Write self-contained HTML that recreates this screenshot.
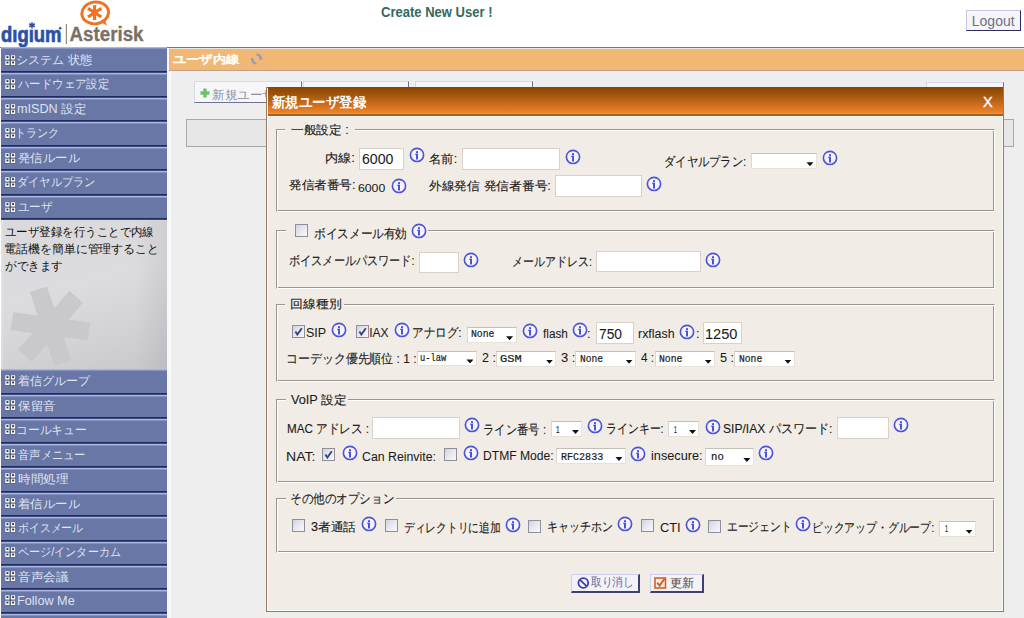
<!DOCTYPE html>
<html><head><meta charset="utf-8"><style>
html,body{margin:0;padding:0}
body{width:1024px;height:618px;overflow:hidden;position:relative;background:#fff;font-family:'Liberation Sans',sans-serif}
.sb{position:absolute;left:1px;width:166px;background:#6977a6}
.sbl{position:absolute;left:1px;width:166px;height:1px;background:#a9b5e2;box-shadow:0 1px 0 #8592c4}
.sbd{position:absolute;left:1px;width:166px;height:1px;background:#1f2a5a;box-shadow:0 1px 0 #3e4a80}
.inf{position:absolute}
.cb{position:absolute;width:11px;height:11px;border:1px solid #8e8f98;background:linear-gradient(135deg,#cfd2e0 0%,#e8e9f0 50%,#f8f8fa 100%)}
.inp{position:absolute;box-sizing:border-box;background:#fff;border:1px solid #d6d2ca}
.sel{position:absolute;box-sizing:border-box;background:#fff;border:1px solid #e6e2da;border-top-color:#c4c0b8;border-left-color:#dcd8d0}
.sel b{position:absolute;width:7px;height:4px;background:#111;clip-path:polygon(0 0,100% 0,50% 100%)}
.fs{position:absolute;box-sizing:border-box;border-top:1px solid #9a958e;border-left:1px solid #9a958e;border-bottom:1px solid #fff;border-right:1px solid #fff;box-shadow:inset 1px 1px 0 #fff, inset -1px -1px 0 #9a958e}
.btn{position:absolute;box-sizing:border-box;background:#f2f2f8;border-top:1px solid #d0d0ec;border-left:1px solid #d0d0ec;border-right:2px solid #404070;border-bottom:2px solid #404070}
</style></head><body>
<!-- logo -->
<svg style="position:absolute;left:0;top:0" width="150" height="47" viewBox="0 0 150 47">
  <ellipse cx="95.2" cy="12.9" rx="13.4" ry="10.9" fill="none" stroke="#f27224" stroke-width="2.9" transform="rotate(-8 95.2 12.9)"/>
  <path d="M99.5 21.5 L107 25.5 L104.5 18.5 Z" fill="#f27224"/>
  <g stroke="#f27224" stroke-width="3.2"><path d="M94.6 5.2v14.8"/><path d="M88 8.4l13.4 8.6"/><path d="M101.4 8.4l-13.4 8.6"/></g>
  <text x="1" y="41.8" font-family="Liberation Sans" font-weight="bold" font-size="21.5" fill="#2b50a8" stroke="#2b50a8" stroke-width="0.7" textLength="60.5" lengthAdjust="spacingAndGlyphs">d&#305;g&#305;um</text>
  <g stroke="#2b50a8" stroke-width="1.6"><path d="M32 22.2v6.2"/><path d="M29.2 23.8l5.6 3"/><path d="M34.8 23.8l-5.6 3"/></g>
  <circle cx="60.2" cy="28.2" r="1.3" fill="#2b50a8"/>
  <rect x="65.8" y="24" width="1.1" height="20" fill="#8a7f72"/>
  <text x="69.5" y="41.2" font-family="Liberation Sans" font-weight="bold" font-size="19.6" fill="#7c7064" stroke="#7c7064" stroke-width="0.3" textLength="74" lengthAdjust="spacingAndGlyphs">Asterisk</text>
</svg>
<div style="position:absolute;left:0;top:46.6px;width:1024px;height:1.5px;background:#5a78b8"></div>
<!-- logout btn -->
<div style="position:absolute;left:966px;top:9.5px;width:54.5px;height:21.5px;box-sizing:border-box;background:#f6f6f8;border-top:1px solid #c8c8e6;border-left:1px solid #c8c8e6;border-right:1.5px solid #2c2c60;border-bottom:1.5px solid #2c2c60"></div>
<!-- sidebar -->
<div style="position:absolute;left:167px;top:48px;width:2px;height:570px;background:#f8f8fc"></div>
<div class="sb" style="top:47px;height:173px"></div><div class="sbl" style="top:47px"></div><div class="sbd" style="top:71px"></div><div class="sbl" style="top:73px"></div><div class="sbd" style="top:96px"></div><div class="sbl" style="top:98px"></div><div class="sbd" style="top:120px"></div><div class="sbl" style="top:122px"></div><div class="sbd" style="top:145px"></div><div class="sbl" style="top:147px"></div><div class="sbd" style="top:169px"></div><div class="sbl" style="top:171px"></div><div class="sbd" style="top:194px"></div><div class="sbl" style="top:196px"></div><div class="sbd" style="top:218px"></div><div class="sb" style="top:369px;height:245px"></div><div class="sbl" style="top:369px"></div><div class="sbd" style="top:393px"></div><div class="sbl" style="top:395px"></div><div class="sbd" style="top:417px"></div><div class="sbl" style="top:419px"></div><div class="sbd" style="top:442px"></div><div class="sbl" style="top:444px"></div><div class="sbd" style="top:466px"></div><div class="sbl" style="top:468px"></div><div class="sbd" style="top:491px"></div><div class="sbl" style="top:493px"></div><div class="sbd" style="top:515px"></div><div class="sbl" style="top:517px"></div><div class="sbd" style="top:540px"></div><div class="sbl" style="top:542px"></div><div class="sbd" style="top:564px"></div><div class="sbl" style="top:566px"></div><div class="sbd" style="top:588px"></div><div class="sbl" style="top:590px"></div><div class="sbd" style="top:612px"></div><div class="sb" style="top:614px;height:10px"></div><div class="sbl" style="top:614px"></div>
<svg style="position:absolute;left:4.5px;top:54.5px" width="11" height="11" viewBox="0 0 11 11"><rect x="0" y="0" width="10.4" height="10.2" fill="#3a4470"/><rect x="0.2" y="0.2" width="4.4" height="4.4" fill="#f6f8f0"/><rect x="1.5" y="1.2" width="1.9" height="1.8" fill="#303448"/><rect x="0.2" y="5.6" width="4.4" height="4.4" fill="#f6f8f0"/><rect x="1.5" y="6.6" width="1.9" height="1.8" fill="#303448"/><rect x="5.8" y="0.2" width="4.4" height="4.4" fill="#f6f8f0"/><rect x="7.1" y="1.2" width="1.9" height="1.8" fill="#303448"/><rect x="5.8" y="5.6" width="4.4" height="4.4" fill="#f6f8f0"/><rect x="7.1" y="6.6" width="1.9" height="1.8" fill="#303448"/></svg><svg style="position:absolute;left:4.5px;top:78.8px" width="11" height="11" viewBox="0 0 11 11"><rect x="0" y="0" width="10.4" height="10.2" fill="#3a4470"/><rect x="0.2" y="0.2" width="4.4" height="4.4" fill="#f6f8f0"/><rect x="1.5" y="1.2" width="1.9" height="1.8" fill="#303448"/><rect x="0.2" y="5.6" width="4.4" height="4.4" fill="#f6f8f0"/><rect x="1.5" y="6.6" width="1.9" height="1.8" fill="#303448"/><rect x="5.8" y="0.2" width="4.4" height="4.4" fill="#f6f8f0"/><rect x="7.1" y="1.2" width="1.9" height="1.8" fill="#303448"/><rect x="5.8" y="5.6" width="4.4" height="4.4" fill="#f6f8f0"/><rect x="7.1" y="6.6" width="1.9" height="1.8" fill="#303448"/></svg><svg style="position:absolute;left:4.5px;top:103.8px" width="11" height="11" viewBox="0 0 11 11"><rect x="0" y="0" width="10.4" height="10.2" fill="#3a4470"/><rect x="0.2" y="0.2" width="4.4" height="4.4" fill="#f6f8f0"/><rect x="1.5" y="1.2" width="1.9" height="1.8" fill="#303448"/><rect x="0.2" y="5.6" width="4.4" height="4.4" fill="#f6f8f0"/><rect x="1.5" y="6.6" width="1.9" height="1.8" fill="#303448"/><rect x="5.8" y="0.2" width="4.4" height="4.4" fill="#f6f8f0"/><rect x="7.1" y="1.2" width="1.9" height="1.8" fill="#303448"/><rect x="5.8" y="5.6" width="4.4" height="4.4" fill="#f6f8f0"/><rect x="7.1" y="6.6" width="1.9" height="1.8" fill="#303448"/></svg><svg style="position:absolute;left:4.5px;top:127.8px" width="11" height="11" viewBox="0 0 11 11"><rect x="0" y="0" width="10.4" height="10.2" fill="#3a4470"/><rect x="0.2" y="0.2" width="4.4" height="4.4" fill="#f6f8f0"/><rect x="1.5" y="1.2" width="1.9" height="1.8" fill="#303448"/><rect x="0.2" y="5.6" width="4.4" height="4.4" fill="#f6f8f0"/><rect x="1.5" y="6.6" width="1.9" height="1.8" fill="#303448"/><rect x="5.8" y="0.2" width="4.4" height="4.4" fill="#f6f8f0"/><rect x="7.1" y="1.2" width="1.9" height="1.8" fill="#303448"/><rect x="5.8" y="5.6" width="4.4" height="4.4" fill="#f6f8f0"/><rect x="7.1" y="6.6" width="1.9" height="1.8" fill="#303448"/></svg><svg style="position:absolute;left:4.5px;top:152.8px" width="11" height="11" viewBox="0 0 11 11"><rect x="0" y="0" width="10.4" height="10.2" fill="#3a4470"/><rect x="0.2" y="0.2" width="4.4" height="4.4" fill="#f6f8f0"/><rect x="1.5" y="1.2" width="1.9" height="1.8" fill="#303448"/><rect x="0.2" y="5.6" width="4.4" height="4.4" fill="#f6f8f0"/><rect x="1.5" y="6.6" width="1.9" height="1.8" fill="#303448"/><rect x="5.8" y="0.2" width="4.4" height="4.4" fill="#f6f8f0"/><rect x="7.1" y="1.2" width="1.9" height="1.8" fill="#303448"/><rect x="5.8" y="5.6" width="4.4" height="4.4" fill="#f6f8f0"/><rect x="7.1" y="6.6" width="1.9" height="1.8" fill="#303448"/></svg><svg style="position:absolute;left:4.5px;top:176.8px" width="11" height="11" viewBox="0 0 11 11"><rect x="0" y="0" width="10.4" height="10.2" fill="#3a4470"/><rect x="0.2" y="0.2" width="4.4" height="4.4" fill="#f6f8f0"/><rect x="1.5" y="1.2" width="1.9" height="1.8" fill="#303448"/><rect x="0.2" y="5.6" width="4.4" height="4.4" fill="#f6f8f0"/><rect x="1.5" y="6.6" width="1.9" height="1.8" fill="#303448"/><rect x="5.8" y="0.2" width="4.4" height="4.4" fill="#f6f8f0"/><rect x="7.1" y="1.2" width="1.9" height="1.8" fill="#303448"/><rect x="5.8" y="5.6" width="4.4" height="4.4" fill="#f6f8f0"/><rect x="7.1" y="6.6" width="1.9" height="1.8" fill="#303448"/></svg><svg style="position:absolute;left:4.5px;top:201.8px" width="11" height="11" viewBox="0 0 11 11"><rect x="0" y="0" width="10.4" height="10.2" fill="#3a4470"/><rect x="0.2" y="0.2" width="4.4" height="4.4" fill="#f6f8f0"/><rect x="1.5" y="1.2" width="1.9" height="1.8" fill="#303448"/><rect x="0.2" y="5.6" width="4.4" height="4.4" fill="#f6f8f0"/><rect x="1.5" y="6.6" width="1.9" height="1.8" fill="#303448"/><rect x="5.8" y="0.2" width="4.4" height="4.4" fill="#f6f8f0"/><rect x="7.1" y="1.2" width="1.9" height="1.8" fill="#303448"/><rect x="5.8" y="5.6" width="4.4" height="4.4" fill="#f6f8f0"/><rect x="7.1" y="6.6" width="1.9" height="1.8" fill="#303448"/></svg><svg style="position:absolute;left:4.5px;top:375.1px" width="11" height="11" viewBox="0 0 11 11"><rect x="0" y="0" width="10.4" height="10.2" fill="#3a4470"/><rect x="0.2" y="0.2" width="4.4" height="4.4" fill="#f6f8f0"/><rect x="1.5" y="1.2" width="1.9" height="1.8" fill="#303448"/><rect x="0.2" y="5.6" width="4.4" height="4.4" fill="#f6f8f0"/><rect x="1.5" y="6.6" width="1.9" height="1.8" fill="#303448"/><rect x="5.8" y="0.2" width="4.4" height="4.4" fill="#f6f8f0"/><rect x="7.1" y="1.2" width="1.9" height="1.8" fill="#303448"/><rect x="5.8" y="5.6" width="4.4" height="4.4" fill="#f6f8f0"/><rect x="7.1" y="6.6" width="1.9" height="1.8" fill="#303448"/></svg><svg style="position:absolute;left:4.5px;top:400.4px" width="11" height="11" viewBox="0 0 11 11"><rect x="0" y="0" width="10.4" height="10.2" fill="#3a4470"/><rect x="0.2" y="0.2" width="4.4" height="4.4" fill="#f6f8f0"/><rect x="1.5" y="1.2" width="1.9" height="1.8" fill="#303448"/><rect x="0.2" y="5.6" width="4.4" height="4.4" fill="#f6f8f0"/><rect x="1.5" y="6.6" width="1.9" height="1.8" fill="#303448"/><rect x="5.8" y="0.2" width="4.4" height="4.4" fill="#f6f8f0"/><rect x="7.1" y="1.2" width="1.9" height="1.8" fill="#303448"/><rect x="5.8" y="5.6" width="4.4" height="4.4" fill="#f6f8f0"/><rect x="7.1" y="6.6" width="1.9" height="1.8" fill="#303448"/></svg><svg style="position:absolute;left:4.5px;top:424.4px" width="11" height="11" viewBox="0 0 11 11"><rect x="0" y="0" width="10.4" height="10.2" fill="#3a4470"/><rect x="0.2" y="0.2" width="4.4" height="4.4" fill="#f6f8f0"/><rect x="1.5" y="1.2" width="1.9" height="1.8" fill="#303448"/><rect x="0.2" y="5.6" width="4.4" height="4.4" fill="#f6f8f0"/><rect x="1.5" y="6.6" width="1.9" height="1.8" fill="#303448"/><rect x="5.8" y="0.2" width="4.4" height="4.4" fill="#f6f8f0"/><rect x="7.1" y="1.2" width="1.9" height="1.8" fill="#303448"/><rect x="5.8" y="5.6" width="4.4" height="4.4" fill="#f6f8f0"/><rect x="7.1" y="6.6" width="1.9" height="1.8" fill="#303448"/></svg><svg style="position:absolute;left:4.5px;top:449.4px" width="11" height="11" viewBox="0 0 11 11"><rect x="0" y="0" width="10.4" height="10.2" fill="#3a4470"/><rect x="0.2" y="0.2" width="4.4" height="4.4" fill="#f6f8f0"/><rect x="1.5" y="1.2" width="1.9" height="1.8" fill="#303448"/><rect x="0.2" y="5.6" width="4.4" height="4.4" fill="#f6f8f0"/><rect x="1.5" y="6.6" width="1.9" height="1.8" fill="#303448"/><rect x="5.8" y="0.2" width="4.4" height="4.4" fill="#f6f8f0"/><rect x="7.1" y="1.2" width="1.9" height="1.8" fill="#303448"/><rect x="5.8" y="5.6" width="4.4" height="4.4" fill="#f6f8f0"/><rect x="7.1" y="6.6" width="1.9" height="1.8" fill="#303448"/></svg><svg style="position:absolute;left:4.5px;top:473.4px" width="11" height="11" viewBox="0 0 11 11"><rect x="0" y="0" width="10.4" height="10.2" fill="#3a4470"/><rect x="0.2" y="0.2" width="4.4" height="4.4" fill="#f6f8f0"/><rect x="1.5" y="1.2" width="1.9" height="1.8" fill="#303448"/><rect x="0.2" y="5.6" width="4.4" height="4.4" fill="#f6f8f0"/><rect x="1.5" y="6.6" width="1.9" height="1.8" fill="#303448"/><rect x="5.8" y="0.2" width="4.4" height="4.4" fill="#f6f8f0"/><rect x="7.1" y="1.2" width="1.9" height="1.8" fill="#303448"/><rect x="5.8" y="5.6" width="4.4" height="4.4" fill="#f6f8f0"/><rect x="7.1" y="6.6" width="1.9" height="1.8" fill="#303448"/></svg><svg style="position:absolute;left:4.5px;top:498.4px" width="11" height="11" viewBox="0 0 11 11"><rect x="0" y="0" width="10.4" height="10.2" fill="#3a4470"/><rect x="0.2" y="0.2" width="4.4" height="4.4" fill="#f6f8f0"/><rect x="1.5" y="1.2" width="1.9" height="1.8" fill="#303448"/><rect x="0.2" y="5.6" width="4.4" height="4.4" fill="#f6f8f0"/><rect x="1.5" y="6.6" width="1.9" height="1.8" fill="#303448"/><rect x="5.8" y="0.2" width="4.4" height="4.4" fill="#f6f8f0"/><rect x="7.1" y="1.2" width="1.9" height="1.8" fill="#303448"/><rect x="5.8" y="5.6" width="4.4" height="4.4" fill="#f6f8f0"/><rect x="7.1" y="6.6" width="1.9" height="1.8" fill="#303448"/></svg><svg style="position:absolute;left:4.5px;top:522.4px" width="11" height="11" viewBox="0 0 11 11"><rect x="0" y="0" width="10.4" height="10.2" fill="#3a4470"/><rect x="0.2" y="0.2" width="4.4" height="4.4" fill="#f6f8f0"/><rect x="1.5" y="1.2" width="1.9" height="1.8" fill="#303448"/><rect x="0.2" y="5.6" width="4.4" height="4.4" fill="#f6f8f0"/><rect x="1.5" y="6.6" width="1.9" height="1.8" fill="#303448"/><rect x="5.8" y="0.2" width="4.4" height="4.4" fill="#f6f8f0"/><rect x="7.1" y="1.2" width="1.9" height="1.8" fill="#303448"/><rect x="5.8" y="5.6" width="4.4" height="4.4" fill="#f6f8f0"/><rect x="7.1" y="6.6" width="1.9" height="1.8" fill="#303448"/></svg><svg style="position:absolute;left:4.5px;top:547.4px" width="11" height="11" viewBox="0 0 11 11"><rect x="0" y="0" width="10.4" height="10.2" fill="#3a4470"/><rect x="0.2" y="0.2" width="4.4" height="4.4" fill="#f6f8f0"/><rect x="1.5" y="1.2" width="1.9" height="1.8" fill="#303448"/><rect x="0.2" y="5.6" width="4.4" height="4.4" fill="#f6f8f0"/><rect x="1.5" y="6.6" width="1.9" height="1.8" fill="#303448"/><rect x="5.8" y="0.2" width="4.4" height="4.4" fill="#f6f8f0"/><rect x="7.1" y="1.2" width="1.9" height="1.8" fill="#303448"/><rect x="5.8" y="5.6" width="4.4" height="4.4" fill="#f6f8f0"/><rect x="7.1" y="6.6" width="1.9" height="1.8" fill="#303448"/></svg><svg style="position:absolute;left:4.5px;top:571.4px" width="11" height="11" viewBox="0 0 11 11"><rect x="0" y="0" width="10.4" height="10.2" fill="#3a4470"/><rect x="0.2" y="0.2" width="4.4" height="4.4" fill="#f6f8f0"/><rect x="1.5" y="1.2" width="1.9" height="1.8" fill="#303448"/><rect x="0.2" y="5.6" width="4.4" height="4.4" fill="#f6f8f0"/><rect x="1.5" y="6.6" width="1.9" height="1.8" fill="#303448"/><rect x="5.8" y="0.2" width="4.4" height="4.4" fill="#f6f8f0"/><rect x="7.1" y="1.2" width="1.9" height="1.8" fill="#303448"/><rect x="5.8" y="5.6" width="4.4" height="4.4" fill="#f6f8f0"/><rect x="7.1" y="6.6" width="1.9" height="1.8" fill="#303448"/></svg><svg style="position:absolute;left:4.5px;top:595.4px" width="11" height="11" viewBox="0 0 11 11"><rect x="0" y="0" width="10.4" height="10.2" fill="#3a4470"/><rect x="0.2" y="0.2" width="4.4" height="4.4" fill="#f6f8f0"/><rect x="1.5" y="1.2" width="1.9" height="1.8" fill="#303448"/><rect x="0.2" y="5.6" width="4.4" height="4.4" fill="#f6f8f0"/><rect x="1.5" y="6.6" width="1.9" height="1.8" fill="#303448"/><rect x="5.8" y="0.2" width="4.4" height="4.4" fill="#f6f8f0"/><rect x="7.1" y="1.2" width="1.9" height="1.8" fill="#303448"/><rect x="5.8" y="5.6" width="4.4" height="4.4" fill="#f6f8f0"/><rect x="7.1" y="6.6" width="1.9" height="1.8" fill="#303448"/></svg>
<div style="position:absolute;left:1px;top:219.5px;width:166px;height:149.8px;background:linear-gradient(90deg,rgba(255,255,255,0.25) 0px,rgba(255,255,255,0) 3px),linear-gradient(90deg,rgba(0,0,20,0) 80%,rgba(0,0,20,0.06) 100%),linear-gradient(165deg,#dadadc 0%,#dcdcde 45%,#d2d2d5 75%,#c8c8cc 100%)"></div>
<svg style="position:absolute;left:1px;top:219.5px" width="166" height="150" viewBox="0 0 166 150">
 <g fill="#c9c9cc" transform="translate(49.6,106.3)">
  <rect x="-9" y="-39" width="18" height="78" transform="rotate(-18)"/>
  <rect x="-9" y="-39" width="18" height="78" transform="rotate(41)"/>
  <rect x="-9" y="-39" width="18" height="78" transform="rotate(97.5)"/>
 </g>
</svg>
<!-- main -->
<div style="position:absolute;left:169px;top:48px;width:855px;height:1px;background:#ece6e0"></div><div style="position:absolute;left:169px;top:49px;width:855px;height:21px;background:#f0b775"></div>
<div style="position:absolute;left:169px;top:70px;width:855px;height:1px;background:#c4a27e"></div><div style="position:absolute;left:169px;top:71px;width:855px;height:2px;background:#eeeef8"></div>
<div style="position:absolute;left:169px;top:73px;width:855px;height:545px;background:#eeeeee"></div>
<div style="position:absolute;left:169px;top:71px;width:2px;height:547px;background:#fafafa"></div>
<svg style="position:absolute;left:250px;top:52.5px" width="13" height="12" viewBox="0 0 13 12"><path d="M6.5 1.5 A4.5 4.5 0 0 1 10.8 5" fill="none" stroke="#8c9cc0" stroke-width="2"/><path d="M6.5 10.5 A4.5 4.5 0 0 1 2.2 7" fill="none" stroke="#8c9cc0" stroke-width="2"/><path d="M9 5h3.5l-1.8 2.5z M4 7H0.5l1.8-2.5z" fill="#8c9cc0"/></svg>
<!-- background buttons -->
<div style="position:absolute;left:194px;top:81px;width:108px;height:22px;box-sizing:border-box;background:#f6f6f8;border-top:1px solid #d8d8ea;border-left:1px solid #d8d8ea;border-right:1px solid #707090;border-bottom:1px solid #707090"></div>
<div style="position:absolute;left:303px;top:81px;width:106px;height:22px;box-sizing:border-box;background:#f6f6f8;border-top:1px solid #d8d8ea;border-left:1px solid #d8d8ea;border-right:1px solid #707090;border-bottom:1px solid #707090"></div>
<div style="position:absolute;left:415px;top:81px;width:118px;height:22px;box-sizing:border-box;background:#f6f6f8;border-top:1px solid #d8d8ea;border-left:1px solid #d8d8ea;border-right:1px solid #707090;border-bottom:1px solid #707090"></div>
<div style="position:absolute;left:925.5px;top:81.5px;width:78px;height:22px;box-sizing:border-box;background:#f6f6f8;border-top:1px solid #d8d8ea;border-left:1px solid #d8d8ea;border-right:1px solid #707090;border-bottom:1px solid #707090"></div>
<svg style="position:absolute;left:199.5px;top:88px" width="10" height="10" viewBox="0 0 10 10"><path d="M3.3 0.5h3.4v2.8h2.8v3.4h-2.8v2.8h-3.4v-2.8h-2.8v-3.4h2.8z" fill="#6ec070"/></svg>
<div style="position:absolute;left:186px;top:118.5px;width:828px;height:28px;box-sizing:border-box;background:#e6e6e6;border:1px solid #a8a8a8"></div>
<span style="position:absolute;left:380.70px;top:4.80px;font:bold 14px/14px 'Liberation Sans',sans-serif;color:#336a5e;white-space:nowrap;transform-origin:0 0;transform:scaleX(0.9303);">Create New User !</span>
<span style="position:absolute;left:971.80px;top:13.50px;font:normal 14px/14px 'Liberation Sans',sans-serif;color:#6e7088;white-space:nowrap;transform-origin:0 0;">Logout</span>
<span style="position:absolute;left:173.00px;top:54.20px;font:bold 11px/11px 'Liberation Sans',sans-serif;color:#fffaf2;white-space:nowrap;transform-origin:0 0;transform:scaleX(1.2000);-webkit-text-stroke:0.2px #fffaf2;">ユーザ内線</span>
<span style="position:absolute;left:212.00px;top:88.50px;font:normal 12px/12px 'Liberation Sans',sans-serif;color:#8a90a8;white-space:nowrap;transform-origin:0 0;transform:scaleX(1.0476);">新規ユーザ登録</span>
<span style="position:absolute;left:16.38px;top:53.90px;font:normal 12px/12px 'Liberation Sans',sans-serif;color:#dfe3f2;white-space:nowrap;transform-origin:0 0;transform:scaleX(1.0096);">システム 状態</span>
<span style="position:absolute;left:18.40px;top:78.40px;font:normal 12px/12px 'Liberation Sans',sans-serif;color:#dfe3f2;white-space:nowrap;transform-origin:0 0;transform:scaleX(0.9505);">ハードウェア設定</span>
<span style="position:absolute;left:17.35px;top:102.90px;font:normal 12px/12px 'Liberation Sans',sans-serif;color:#dfe3f2;white-space:nowrap;transform-origin:0 0;transform:scaleX(1.0531);">mISDN 設定</span>
<span style="position:absolute;left:14.73px;top:127.40px;font:normal 12px/12px 'Liberation Sans',sans-serif;color:#dfe3f2;white-space:nowrap;transform-origin:0 0;transform:scaleX(0.9167);">トランク</span>
<span style="position:absolute;left:18.40px;top:151.90px;font:normal 12px/12px 'Liberation Sans',sans-serif;color:#dfe3f2;white-space:nowrap;transform-origin:0 0;transform:scaleX(1.0317);">発信ルール</span>
<span style="position:absolute;left:17.47px;top:176.40px;font:normal 12px/12px 'Liberation Sans',sans-serif;color:#dfe3f2;white-space:nowrap;transform-origin:0 0;transform:scaleX(0.9329);">ダイヤルプラン</span>
<span style="position:absolute;left:18.40px;top:200.90px;font:normal 12px/12px 'Liberation Sans',sans-serif;color:#dfe3f2;white-space:nowrap;transform-origin:0 0;transform:scaleX(0.9583);">ユーザ</span>
<span style="position:absolute;left:18.40px;top:375.40px;font:normal 12px/12px 'Liberation Sans',sans-serif;color:#dfe3f2;white-space:nowrap;transform-origin:0 0;transform:scaleX(1.0042);">着信グループ</span>
<span style="position:absolute;left:18.40px;top:399.82px;font:normal 12px/12px 'Liberation Sans',sans-serif;color:#dfe3f2;white-space:nowrap;transform-origin:0 0;transform:scaleX(1.0472);">保留音</span>
<span style="position:absolute;left:16.44px;top:424.24px;font:normal 12px/12px 'Liberation Sans',sans-serif;color:#dfe3f2;white-space:nowrap;transform-origin:0 0;transform:scaleX(0.9797);">コールキュー</span>
<span style="position:absolute;left:18.40px;top:448.66px;font:normal 12px/12px 'Liberation Sans',sans-serif;color:#dfe3f2;white-space:nowrap;transform-origin:0 0;transform:scaleX(0.9408);">音声メニュー</span>
<span style="position:absolute;left:18.40px;top:473.08px;font:normal 12px/12px 'Liberation Sans',sans-serif;color:#dfe3f2;white-space:nowrap;transform-origin:0 0;transform:scaleX(1.0542);">時間処理</span>
<span style="position:absolute;left:18.40px;top:497.50px;font:normal 12px/12px 'Liberation Sans',sans-serif;color:#dfe3f2;white-space:nowrap;transform-origin:0 0;transform:scaleX(1.0317);">着信ルール</span>
<span style="position:absolute;left:18.40px;top:521.92px;font:normal 12px/12px 'Liberation Sans',sans-serif;color:#dfe3f2;white-space:nowrap;transform-origin:0 0;transform:scaleX(0.9056);">ボイスメール</span>
<span style="position:absolute;left:18.40px;top:546.34px;font:normal 12px/12px 'Liberation Sans',sans-serif;color:#dfe3f2;white-space:nowrap;transform-origin:0 0;transform:scaleX(0.9236);">ページ/インターカム</span>
<span style="position:absolute;left:18.40px;top:570.76px;font:normal 12px/12px 'Liberation Sans',sans-serif;color:#dfe3f2;white-space:nowrap;transform-origin:0 0;transform:scaleX(1.0521);">音声会議</span>
<span style="position:absolute;left:17.34px;top:595.18px;font:normal 12px/12px 'Liberation Sans',sans-serif;color:#dfe3f2;white-space:nowrap;transform-origin:0 0;transform:scaleX(1.0556);">Follow Me</span>
<span style="position:absolute;left:5.40px;top:225.50px;font:normal 12px/12px 'Liberation Sans',sans-serif;color:#111;white-space:nowrap;transform-origin:0 0;transform:scaleX(0.9545);">ユーザ登録を行うことで内線</span>
<span style="position:absolute;left:4.41px;top:242.70px;font:normal 12px/12px 'Liberation Sans',sans-serif;color:#111;white-space:nowrap;transform-origin:0 0;transform:scaleX(0.9941);">電話機を簡単に管理すること</span>
<span style="position:absolute;left:5.40px;top:259.70px;font:normal 12px/12px 'Liberation Sans',sans-serif;color:#111;white-space:nowrap;transform-origin:0 0;transform:scaleX(0.9627);">ができます</span>
<!-- dialog -->
<div style="position:absolute;left:266px;top:87px;width:738px;height:525px;box-sizing:border-box;background:#f1ede6;border:1.5px solid #9a7a64;box-shadow:inset 1px 1px 0 #fbfaf4, inset -1px -1px 0 #fdfcf6"></div>
<div style="position:absolute;left:267.5px;top:87px;width:735px;height:26.5px;background:linear-gradient(180deg,#874400 0%,#a85a10 35%,#d87422 75%,#f2862c 100%)"></div>
<div style="position:absolute;left:267.5px;top:112.8px;width:735px;height:1.3px;background:#f8922e"></div>
<div style="position:absolute;left:267.5px;top:114.1px;width:735px;height:1.5px;background:#a4601c"></div>
<div style="position:absolute;left:267.5px;top:115.6px;width:735px;height:1px;background:#fbfaf6"></div>
<div class="fs" style="left:276px;top:129px;width:718.5px;height:83px"></div><div style="position:absolute;left:284.7px;top:127px;width:70.0px;height:5px;background:#f1ede6"></div><div class="fs" style="left:276px;top:230px;width:718.5px;height:59px"></div><div style="position:absolute;left:286px;top:228px;width:142.39999999999998px;height:5px;background:#f1ede6"></div><div class="fs" style="left:276px;top:303.5px;width:718.5px;height:78.5px"></div><div style="position:absolute;left:285px;top:301.5px;width:59.25px;height:5px;background:#f1ede6"></div><div class="fs" style="left:276px;top:399px;width:718.5px;height:83.5px"></div><div style="position:absolute;left:285.5px;top:397px;width:62.80000000000001px;height:5px;background:#f1ede6"></div><div class="fs" style="left:276px;top:497.5px;width:718.5px;height:55.5px"></div><div style="position:absolute;left:286px;top:495.5px;width:109.80000000000001px;height:5px;background:#f1ede6"></div><div class="inp" style="left:359.0px;top:148.2px;width:45.4px;height:21.5px"></div><svg class="inf" style="left:408.9px;top:147.4px" width="16" height="16" viewBox="0 0 16 16"><circle cx="8" cy="7.9" r="6.6" fill="#f6f4fa" stroke="#4d54dc" stroke-width="1.65"/><rect x="7" y="4.2" width="2" height="2" fill="#4b52d8"/><path d="M6.2 6.8h2.8v5.8h-2v-4.6h-0.8z" fill="#4b52d8"/></svg><div class="inp" style="left:461.9px;top:148.1px;width:98.5px;height:21.9px"></div><svg class="inf" style="left:564.5px;top:149.1px" width="16" height="16" viewBox="0 0 16 16"><circle cx="8" cy="7.9" r="6.6" fill="#f6f4fa" stroke="#4d54dc" stroke-width="1.65"/><rect x="7" y="4.2" width="2" height="2" fill="#4b52d8"/><path d="M6.2 6.8h2.8v5.8h-2v-4.6h-0.8z" fill="#4b52d8"/></svg><div class="sel" style="left:751.4px;top:153.4px;width:65.6px;height:15.8px"><b style="left:54.1px;top:7.9px"></b></div><svg class="inf" style="left:822.1px;top:149.9px" width="16" height="16" viewBox="0 0 16 16"><circle cx="8" cy="7.9" r="6.6" fill="#f6f4fa" stroke="#4d54dc" stroke-width="1.65"/><rect x="7" y="4.2" width="2" height="2" fill="#4b52d8"/><path d="M6.2 6.8h2.8v5.8h-2v-4.6h-0.8z" fill="#4b52d8"/></svg><svg class="inf" style="left:390.8px;top:177.8px" width="16" height="16" viewBox="0 0 16 16"><circle cx="8" cy="7.9" r="6.6" fill="#f6f4fa" stroke="#4d54dc" stroke-width="1.65"/><rect x="7" y="4.2" width="2" height="2" fill="#4b52d8"/><path d="M6.2 6.8h2.8v5.8h-2v-4.6h-0.8z" fill="#4b52d8"/></svg><div class="inp" style="left:554.7px;top:175.4px;width:87.0px;height:21.7px"></div><svg class="inf" style="left:646.3px;top:176.3px" width="16" height="16" viewBox="0 0 16 16"><circle cx="8" cy="7.9" r="6.6" fill="#f6f4fa" stroke="#4d54dc" stroke-width="1.65"/><rect x="7" y="4.2" width="2" height="2" fill="#4b52d8"/><path d="M6.2 6.8h2.8v5.8h-2v-4.6h-0.8z" fill="#4b52d8"/></svg><div class="cb" style="left:295.2px;top:224.4px"></div><svg class="inf" style="left:410.8px;top:222.8px" width="16" height="16" viewBox="0 0 16 16"><circle cx="8" cy="7.9" r="6.6" fill="#f6f4fa" stroke="#4d54dc" stroke-width="1.65"/><rect x="7" y="4.2" width="2" height="2" fill="#4b52d8"/><path d="M6.2 6.8h2.8v5.8h-2v-4.6h-0.8z" fill="#4b52d8"/></svg><div class="inp" style="left:418.6px;top:252.0px;width:40.1px;height:20.6px"></div><svg class="inf" style="left:463.1px;top:251.5px" width="16" height="16" viewBox="0 0 16 16"><circle cx="8" cy="7.9" r="6.6" fill="#f6f4fa" stroke="#4d54dc" stroke-width="1.65"/><rect x="7" y="4.2" width="2" height="2" fill="#4b52d8"/><path d="M6.2 6.8h2.8v5.8h-2v-4.6h-0.8z" fill="#4b52d8"/></svg><div class="inp" style="left:596.0px;top:251.2px;width:104.5px;height:21.1px"></div><svg class="inf" style="left:704.6px;top:252.4px" width="16" height="16" viewBox="0 0 16 16"><circle cx="8" cy="7.9" r="6.6" fill="#f6f4fa" stroke="#4d54dc" stroke-width="1.65"/><rect x="7" y="4.2" width="2" height="2" fill="#4b52d8"/><path d="M6.2 6.8h2.8v5.8h-2v-4.6h-0.8z" fill="#4b52d8"/></svg><div class="cb" style="left:292.4px;top:325.3px"><svg width="11" height="11" viewBox="0 0 11 11" style="position:absolute;left:0;top:0"><path d="M2.4 5.4 L4.4 8.5 L8.8 2.3" fill="none" stroke="#3c4482" stroke-width="1.9"/></svg></div><svg class="inf" style="left:330.5px;top:322.1px" width="16" height="16" viewBox="0 0 16 16"><circle cx="8" cy="7.9" r="6.6" fill="#f6f4fa" stroke="#4d54dc" stroke-width="1.65"/><rect x="7" y="4.2" width="2" height="2" fill="#4b52d8"/><path d="M6.2 6.8h2.8v5.8h-2v-4.6h-0.8z" fill="#4b52d8"/></svg><div class="cb" style="left:355.7px;top:325.3px"><svg width="11" height="11" viewBox="0 0 11 11" style="position:absolute;left:0;top:0"><path d="M2.4 5.4 L4.4 8.5 L8.8 2.3" fill="none" stroke="#3c4482" stroke-width="1.9"/></svg></div><svg class="inf" style="left:393.8px;top:322.1px" width="16" height="16" viewBox="0 0 16 16"><circle cx="8" cy="7.9" r="6.6" fill="#f6f4fa" stroke="#4d54dc" stroke-width="1.65"/><rect x="7" y="4.2" width="2" height="2" fill="#4b52d8"/><path d="M6.2 6.8h2.8v5.8h-2v-4.6h-0.8z" fill="#4b52d8"/></svg><div class="sel" style="left:466.6px;top:327.4px;width:50.0px;height:15.6px"><b style="left:38.5px;top:7.8px"></b></div><svg class="inf" style="left:521.7px;top:323.0px" width="16" height="16" viewBox="0 0 16 16"><circle cx="8" cy="7.9" r="6.6" fill="#f6f4fa" stroke="#4d54dc" stroke-width="1.65"/><rect x="7" y="4.2" width="2" height="2" fill="#4b52d8"/><path d="M6.2 6.8h2.8v5.8h-2v-4.6h-0.8z" fill="#4b52d8"/></svg><svg class="inf" style="left:571.7px;top:322.2px" width="16" height="16" viewBox="0 0 16 16"><circle cx="8" cy="7.9" r="6.6" fill="#f6f4fa" stroke="#4d54dc" stroke-width="1.65"/><rect x="7" y="4.2" width="2" height="2" fill="#4b52d8"/><path d="M6.2 6.8h2.8v5.8h-2v-4.6h-0.8z" fill="#4b52d8"/></svg><div class="inp" style="left:595.5px;top:321.9px;width:38.5px;height:21.9px"></div><svg class="inf" style="left:679.3px;top:323.5px" width="16" height="16" viewBox="0 0 16 16"><circle cx="8" cy="7.9" r="6.6" fill="#f6f4fa" stroke="#4d54dc" stroke-width="1.65"/><rect x="7" y="4.2" width="2" height="2" fill="#4b52d8"/><path d="M6.2 6.8h2.8v5.8h-2v-4.6h-0.8z" fill="#4b52d8"/></svg><div class="inp" style="left:703.3px;top:321.9px;width:39.0px;height:21.9px"></div><div class="sel" style="left:416.6px;top:350.8px;width:60.4px;height:15.4px"><b style="left:48.9px;top:7.7px"></b></div><div class="sel" style="left:496.4px;top:350.9px;width:60.1px;height:15.8px"><b style="left:48.6px;top:7.9px"></b></div><div class="sel" style="left:575.4px;top:350.9px;width:60.7px;height:15.8px"><b style="left:49.2px;top:7.9px"></b></div><div class="sel" style="left:655.0px;top:350.9px;width:60.2px;height:15.8px"><b style="left:48.7px;top:7.9px"></b></div><div class="sel" style="left:734.0px;top:350.9px;width:60.9px;height:15.8px"><b style="left:49.4px;top:7.9px"></b></div><div class="inp" style="left:372.4px;top:417.4px;width:87.3px;height:21.6px"></div><svg class="inf" style="left:463.9px;top:417.3px" width="16" height="16" viewBox="0 0 16 16"><circle cx="8" cy="7.9" r="6.6" fill="#f6f4fa" stroke="#4d54dc" stroke-width="1.65"/><rect x="7" y="4.2" width="2" height="2" fill="#4b52d8"/><path d="M6.2 6.8h2.8v5.8h-2v-4.6h-0.8z" fill="#4b52d8"/></svg><div class="sel" style="left:551.2px;top:420.8px;width:31.3px;height:16.2px"><b style="left:19.8px;top:8.1px"></b></div><svg class="inf" style="left:587.3px;top:418.4px" width="16" height="16" viewBox="0 0 16 16"><circle cx="8" cy="7.9" r="6.6" fill="#f6f4fa" stroke="#4d54dc" stroke-width="1.65"/><rect x="7" y="4.2" width="2" height="2" fill="#4b52d8"/><path d="M6.2 6.8h2.8v5.8h-2v-4.6h-0.8z" fill="#4b52d8"/></svg><div class="sel" style="left:668.4px;top:420.8px;width:31.1px;height:16.7px"><b style="left:19.6px;top:8.3px"></b></div><svg class="inf" style="left:704.8px;top:418.5px" width="16" height="16" viewBox="0 0 16 16"><circle cx="8" cy="7.9" r="6.6" fill="#f6f4fa" stroke="#4d54dc" stroke-width="1.65"/><rect x="7" y="4.2" width="2" height="2" fill="#4b52d8"/><path d="M6.2 6.8h2.8v5.8h-2v-4.6h-0.8z" fill="#4b52d8"/></svg><div class="inp" style="left:837.1px;top:416.8px;width:51.7px;height:22.7px"></div><svg class="inf" style="left:892.7px;top:416.8px" width="16" height="16" viewBox="0 0 16 16"><circle cx="8" cy="7.9" r="6.6" fill="#f6f4fa" stroke="#4d54dc" stroke-width="1.65"/><rect x="7" y="4.2" width="2" height="2" fill="#4b52d8"/><path d="M6.2 6.8h2.8v5.8h-2v-4.6h-0.8z" fill="#4b52d8"/></svg><div class="cb" style="left:322.0px;top:447.6px"><svg width="11" height="11" viewBox="0 0 11 11" style="position:absolute;left:0;top:0"><path d="M2.4 5.4 L4.4 8.5 L8.8 2.3" fill="none" stroke="#3c4482" stroke-width="1.9"/></svg></div><svg class="inf" style="left:342.3px;top:445.0px" width="16" height="16" viewBox="0 0 16 16"><circle cx="8" cy="7.9" r="6.6" fill="#f6f4fa" stroke="#4d54dc" stroke-width="1.65"/><rect x="7" y="4.2" width="2" height="2" fill="#4b52d8"/><path d="M6.2 6.8h2.8v5.8h-2v-4.6h-0.8z" fill="#4b52d8"/></svg><div class="cb" style="left:443.8px;top:447.6px"></div><svg class="inf" style="left:463.4px;top:445.4px" width="16" height="16" viewBox="0 0 16 16"><circle cx="8" cy="7.9" r="6.6" fill="#f6f4fa" stroke="#4d54dc" stroke-width="1.65"/><rect x="7" y="4.2" width="2" height="2" fill="#4b52d8"/><path d="M6.2 6.8h2.8v5.8h-2v-4.6h-0.8z" fill="#4b52d8"/></svg><div class="sel" style="left:556.3px;top:448.2px;width:69.7px;height:15.8px"><b style="left:58.2px;top:7.9px"></b></div><svg class="inf" style="left:630.4px;top:445.8px" width="16" height="16" viewBox="0 0 16 16"><circle cx="8" cy="7.9" r="6.6" fill="#f6f4fa" stroke="#4d54dc" stroke-width="1.65"/><rect x="7" y="4.2" width="2" height="2" fill="#4b52d8"/><path d="M6.2 6.8h2.8v5.8h-2v-4.6h-0.8z" fill="#4b52d8"/></svg><div class="sel" style="left:705.0px;top:447.5px;width:48.9px;height:18.8px"><b style="left:37.4px;top:9.4px"></b></div><svg class="inf" style="left:757.6px;top:445.0px" width="16" height="16" viewBox="0 0 16 16"><circle cx="8" cy="7.9" r="6.6" fill="#f6f4fa" stroke="#4d54dc" stroke-width="1.65"/><rect x="7" y="4.2" width="2" height="2" fill="#4b52d8"/><path d="M6.2 6.8h2.8v5.8h-2v-4.6h-0.8z" fill="#4b52d8"/></svg><div class="cb" style="left:291.9px;top:519.0px"></div><svg class="inf" style="left:361.0px;top:516.4px" width="16" height="16" viewBox="0 0 16 16"><circle cx="8" cy="7.9" r="6.6" fill="#f6f4fa" stroke="#4d54dc" stroke-width="1.65"/><rect x="7" y="4.2" width="2" height="2" fill="#4b52d8"/><path d="M6.2 6.8h2.8v5.8h-2v-4.6h-0.8z" fill="#4b52d8"/></svg><div class="cb" style="left:385.0px;top:519.3px"></div><svg class="inf" style="left:504.5px;top:517.0px" width="16" height="16" viewBox="0 0 16 16"><circle cx="8" cy="7.9" r="6.6" fill="#f6f4fa" stroke="#4d54dc" stroke-width="1.65"/><rect x="7" y="4.2" width="2" height="2" fill="#4b52d8"/><path d="M6.2 6.8h2.8v5.8h-2v-4.6h-0.8z" fill="#4b52d8"/></svg><div class="cb" style="left:527.8px;top:519.5px"></div><svg class="inf" style="left:616.8px;top:516.4px" width="16" height="16" viewBox="0 0 16 16"><circle cx="8" cy="7.9" r="6.6" fill="#f6f4fa" stroke="#4d54dc" stroke-width="1.65"/><rect x="7" y="4.2" width="2" height="2" fill="#4b52d8"/><path d="M6.2 6.8h2.8v5.8h-2v-4.6h-0.8z" fill="#4b52d8"/></svg><div class="cb" style="left:641.0px;top:519.4px"></div><svg class="inf" style="left:684.5px;top:516.5px" width="16" height="16" viewBox="0 0 16 16"><circle cx="8" cy="7.9" r="6.6" fill="#f6f4fa" stroke="#4d54dc" stroke-width="1.65"/><rect x="7" y="4.2" width="2" height="2" fill="#4b52d8"/><path d="M6.2 6.8h2.8v5.8h-2v-4.6h-0.8z" fill="#4b52d8"/></svg><div class="cb" style="left:708.4px;top:519.5px"></div><svg class="inf" style="left:794.7px;top:515.9px" width="16" height="16" viewBox="0 0 16 16"><circle cx="8" cy="7.9" r="6.6" fill="#f6f4fa" stroke="#4d54dc" stroke-width="1.65"/><rect x="7" y="4.2" width="2" height="2" fill="#4b52d8"/><path d="M6.2 6.8h2.8v5.8h-2v-4.6h-0.8z" fill="#4b52d8"/></svg><div class="sel" style="left:939.2px;top:520.8px;width:36.9px;height:15.8px"><b style="left:25.4px;top:7.9px"></b></div><div class="btn" style="left:571px;top:574px;width:68.7px;height:18.5px"></div><div class="btn" style="left:650px;top:574px;width:53.75px;height:18.5px"></div><svg style="position:absolute;left:576.5px;top:576.8px" width="13" height="12" viewBox="0 0 13 12"><circle cx="6.3" cy="6" r="4.9" fill="none" stroke="#3a3eb0" stroke-width="1.8"/><path d="M3 2.8 L9.6 9.2" stroke="#3a3eb0" stroke-width="1.8"/></svg><svg style="position:absolute;left:654px;top:577px" width="13" height="12" viewBox="0 0 13 12"><rect x="1" y="1" width="10.5" height="10" fill="#fbeee0" stroke="#d0602a" stroke-width="1.6"/><path d="M3.2 5.6 L5.6 8.6 L10.6 1.6" fill="none" stroke="#d0602a" stroke-width="1.9"/></svg>
<span style="position:absolute;left:271.50px;top:95.00px;font:bold 14px/14px 'Liberation Sans',sans-serif;color:#ffffff;white-space:nowrap;transform-origin:0 0;transform:scaleX(0.9612);">新規ユーザ登録</span>
<span style="position:absolute;left:982.70px;top:94.70px;font:normal 14px/14px 'Liberation Sans',sans-serif;color:#ffffff;white-space:nowrap;transform-origin:0 0;transform:scaleX(1.0333);-webkit-text-stroke:0.35px #ffffff;">X</span>
<span style="position:absolute;left:290.90px;top:123.50px;font:normal 12px/12px 'Liberation Sans',sans-serif;color:#1a1a1a;white-space:nowrap;transform-origin:0 0;transform:scaleX(1.0574);-webkit-text-stroke:0.12px #1a1a1a;">一般設定 :</span>
<span style="position:absolute;left:314.40px;top:227.00px;font:normal 13px/13px 'Liberation Sans',sans-serif;color:#1a1a1a;white-space:nowrap;transform-origin:0 0;transform:scaleX(0.8951);-webkit-text-stroke:0.12px #1a1a1a;">ボイスメール有効</span>
<span style="position:absolute;left:289.73px;top:297.90px;font:normal 12px/12px 'Liberation Sans',sans-serif;color:#1a1a1a;white-space:nowrap;transform-origin:0 0;transform:scaleX(1.0702);-webkit-text-stroke:0.12px #1a1a1a;">回線種別</span>
<span style="position:absolute;left:290.80px;top:393.50px;font:normal 12px/12px 'Liberation Sans',sans-serif;color:#1a1a1a;white-space:nowrap;transform-origin:0 0;transform:scaleX(1.0569);-webkit-text-stroke:0.12px #1a1a1a;">VoIP 設定</span>
<span style="position:absolute;left:289.91px;top:491.50px;font:normal 13px/13px 'Liberation Sans',sans-serif;color:#1a1a1a;white-space:nowrap;transform-origin:0 0;transform:scaleX(0.8904);-webkit-text-stroke:0.12px #1a1a1a;">その他のオプション</span>
<span style="position:absolute;left:324.80px;top:151.90px;font:normal 12px/12px 'Liberation Sans',sans-serif;color:#1a1a1a;white-space:nowrap;transform-origin:0 0;transform:scaleX(1.0962);-webkit-text-stroke:0.12px #1a1a1a;">内線:</span>
<span style="position:absolute;left:361.90px;top:151.80px;font:normal 14px/14px 'Liberation Sans',sans-serif;color:#1a1a1a;white-space:nowrap;transform-origin:0 0;transform:scaleX(1.0065);-webkit-text-stroke:0.05px #1a1a1a;">6000</span>
<span style="position:absolute;left:429.40px;top:153.00px;font:normal 12px/12px 'Liberation Sans',sans-serif;color:#1a1a1a;white-space:nowrap;transform-origin:0 0;transform:scaleX(1.0296);-webkit-text-stroke:0.12px #1a1a1a;">名前:</span>
<span style="position:absolute;left:664.46px;top:154.80px;font:normal 13px/13px 'Liberation Sans',sans-serif;color:#1a1a1a;white-space:nowrap;transform-origin:0 0;transform:scaleX(0.8685);-webkit-text-stroke:0.12px #1a1a1a;">ダイヤルプラン:</span>
<span style="position:absolute;left:288.60px;top:179.00px;font:normal 12px/12px 'Liberation Sans',sans-serif;color:#1a1a1a;white-space:nowrap;transform-origin:0 0;transform:scaleX(1.0492);-webkit-text-stroke:0.12px #1a1a1a;">発信者番号:</span>
<span style="position:absolute;left:358.10px;top:184.20px;font:normal 10px/10px 'Liberation Sans',sans-serif;color:#1a1a1a;white-space:nowrap;transform-origin:0 0;transform:scaleX(1.2227);-webkit-text-stroke:0.05px #1a1a1a;">6000</span>
<span style="position:absolute;left:428.90px;top:180.10px;font:normal 12px/12px 'Liberation Sans',sans-serif;color:#1a1a1a;white-space:nowrap;transform-origin:0 0;transform:scaleX(1.0623);-webkit-text-stroke:0.12px #1a1a1a;">外線発信 発信者番号:</span>
<span style="position:absolute;left:288.50px;top:254.10px;font:normal 13px/13px 'Liberation Sans',sans-serif;color:#1a1a1a;white-space:nowrap;transform-origin:0 0;transform:scaleX(0.8562);-webkit-text-stroke:0.12px #1a1a1a;">ボイスメールパスワード:</span>
<span style="position:absolute;left:511.55px;top:254.50px;font:normal 13px/13px 'Liberation Sans',sans-serif;color:#1a1a1a;white-space:nowrap;transform-origin:0 0;transform:scaleX(0.8452);-webkit-text-stroke:0.12px #1a1a1a;">メールアドレス:</span>
<span style="position:absolute;left:305.96px;top:327.40px;font:normal 12px/12px 'Liberation Sans',sans-serif;color:#1a1a1a;white-space:nowrap;transform-origin:0 0;transform:scaleX(1.0444);-webkit-text-stroke:0.05px #1a1a1a;">SIP</span>
<span style="position:absolute;left:369.20px;top:327.40px;font:normal 12px/12px 'Liberation Sans',sans-serif;color:#1a1a1a;white-space:nowrap;transform-origin:0 0;-webkit-text-stroke:0.05px #1a1a1a;">IAX</span>
<span style="position:absolute;left:412.21px;top:326.00px;font:normal 13px/13px 'Liberation Sans',sans-serif;color:#1a1a1a;white-space:nowrap;transform-origin:0 0;transform:scaleX(0.8889);-webkit-text-stroke:0.12px #1a1a1a;">アナログ:</span>
<span style="position:absolute;left:542.50px;top:328.25px;font:normal 12px/12px 'Liberation Sans',sans-serif;color:#1a1a1a;white-space:nowrap;transform-origin:0 0;transform:scaleX(0.9800);-webkit-text-stroke:0.05px #1a1a1a;">flash</span>
<span style="position:absolute;left:587.35px;top:328.30px;font:normal 12px/12px 'Liberation Sans',sans-serif;color:#1a1a1a;white-space:nowrap;transform-origin:0 0;transform:scaleX(1.0500);-webkit-text-stroke:0.05px #1a1a1a;">:</span>
<span style="position:absolute;left:598.60px;top:326.60px;font:normal 14px/14px 'Liberation Sans',sans-serif;color:#1a1a1a;white-space:nowrap;transform-origin:0 0;transform:scaleX(0.9848);-webkit-text-stroke:0.05px #1a1a1a;">750</span>
<span style="position:absolute;left:638.10px;top:328.25px;font:normal 12px/12px 'Liberation Sans',sans-serif;color:#1a1a1a;white-space:nowrap;transform-origin:0 0;transform:scaleX(1.0371);-webkit-text-stroke:0.05px #1a1a1a;">rxflash</span>
<span style="position:absolute;left:695.95px;top:328.30px;font:normal 12px/12px 'Liberation Sans',sans-serif;color:#1a1a1a;white-space:nowrap;transform-origin:0 0;transform:scaleX(1.0500);-webkit-text-stroke:0.05px #1a1a1a;">:</span>
<span style="position:absolute;left:705.36px;top:326.60px;font:normal 14px/14px 'Liberation Sans',sans-serif;color:#1a1a1a;white-space:nowrap;transform-origin:0 0;transform:scaleX(1.0433);-webkit-text-stroke:0.05px #1a1a1a;">1250</span>
<span style="position:absolute;left:285.57px;top:351.90px;font:normal 13px/13px 'Liberation Sans',sans-serif;color:#1a1a1a;white-space:nowrap;transform-origin:0 0;transform:scaleX(0.9171);-webkit-text-stroke:0.12px #1a1a1a;">コーデック優先順位 : 1 :</span>
<span style="position:absolute;left:482.00px;top:352.40px;font:normal 12px/12px 'Liberation Sans',sans-serif;color:#1a1a1a;white-space:nowrap;transform-origin:0 0;transform:scaleX(1.0385);-webkit-text-stroke:0.05px #1a1a1a;">2 :</span>
<span style="position:absolute;left:560.50px;top:352.40px;font:normal 12px/12px 'Liberation Sans',sans-serif;color:#1a1a1a;white-space:nowrap;transform-origin:0 0;transform:scaleX(1.0846);-webkit-text-stroke:0.05px #1a1a1a;">3 :</span>
<span style="position:absolute;left:640.90px;top:352.40px;font:normal 12px/12px 'Liberation Sans',sans-serif;color:#1a1a1a;white-space:nowrap;transform-origin:0 0;transform:scaleX(0.9846);-webkit-text-stroke:0.05px #1a1a1a;">4 :</span>
<span style="position:absolute;left:719.60px;top:352.40px;font:normal 12px/12px 'Liberation Sans',sans-serif;color:#1a1a1a;white-space:nowrap;transform-origin:0 0;transform:scaleX(1.0538);-webkit-text-stroke:0.05px #1a1a1a;">5 :</span>
<span style="position:absolute;left:286.81px;top:421.60px;font:normal 13px/13px 'Liberation Sans',sans-serif;color:#1a1a1a;white-space:nowrap;transform-origin:0 0;transform:scaleX(0.8944);-webkit-text-stroke:0.12px #1a1a1a;">MAC アドレス :</span>
<span style="position:absolute;left:483.38px;top:422.80px;font:normal 13px/13px 'Liberation Sans',sans-serif;color:#1a1a1a;white-space:nowrap;transform-origin:0 0;transform:scaleX(0.8736);-webkit-text-stroke:0.12px #1a1a1a;">ライン番号 :</span>
<span style="position:absolute;left:606.46px;top:421.80px;font:normal 13px/13px 'Liberation Sans',sans-serif;color:#1a1a1a;white-space:nowrap;transform-origin:0 0;transform:scaleX(0.8388);-webkit-text-stroke:0.12px #1a1a1a;">ラインキー:</span>
<span style="position:absolute;left:723.17px;top:421.90px;font:normal 13px/13px 'Liberation Sans',sans-serif;color:#1a1a1a;white-space:nowrap;transform-origin:0 0;transform:scaleX(0.9293);-webkit-text-stroke:0.12px #1a1a1a;">SIP/IAX パスワード:</span>
<span style="position:absolute;left:286.23px;top:450.70px;font:normal 12px/12px 'Liberation Sans',sans-serif;color:#1a1a1a;white-space:nowrap;transform-origin:0 0;transform:scaleX(1.1696);-webkit-text-stroke:0.05px #1a1a1a;">NAT:</span>
<span style="position:absolute;left:362.10px;top:450.70px;font:normal 12px/12px 'Liberation Sans',sans-serif;color:#1a1a1a;white-space:nowrap;transform-origin:0 0;transform:scaleX(1.0268);-webkit-text-stroke:0.05px #1a1a1a;">Can Reinvite:</span>
<span style="position:absolute;left:482.69px;top:449.80px;font:normal 12px/12px 'Liberation Sans',sans-serif;color:#1a1a1a;white-space:nowrap;transform-origin:0 0;transform:scaleX(1.0088);-webkit-text-stroke:0.05px #1a1a1a;">DTMF Mode:</span>
<span style="position:absolute;left:650.80px;top:450.25px;font:normal 12px/12px 'Liberation Sans',sans-serif;color:#1a1a1a;white-space:nowrap;transform-origin:0 0;transform:scaleX(1.0583);-webkit-text-stroke:0.05px #1a1a1a;">insecure:</span>
<span style="position:absolute;left:310.80px;top:520.80px;font:normal 12px/12px 'Liberation Sans',sans-serif;color:#1a1a1a;white-space:nowrap;transform-origin:0 0;transform:scaleX(1.0558);-webkit-text-stroke:0.12px #1a1a1a;">3者通話</span>
<span style="position:absolute;left:403.58px;top:521.40px;font:normal 13px/13px 'Liberation Sans',sans-serif;color:#1a1a1a;white-space:nowrap;transform-origin:0 0;transform:scaleX(0.8243);-webkit-text-stroke:0.12px #1a1a1a;">ディレクトリに追加</span>
<span style="position:absolute;left:547.06px;top:519.80px;font:normal 13px/13px 'Liberation Sans',sans-serif;color:#1a1a1a;white-space:nowrap;transform-origin:0 0;transform:scaleX(0.8434);-webkit-text-stroke:0.12px #1a1a1a;">キャッチホン</span>
<span style="position:absolute;left:659.90px;top:521.90px;font:normal 12px/12px 'Liberation Sans',sans-serif;color:#1a1a1a;white-space:nowrap;transform-origin:0 0;transform:scaleX(1.0684);-webkit-text-stroke:0.05px #1a1a1a;">CTI</span>
<span style="position:absolute;left:727.08px;top:519.70px;font:normal 13px/13px 'Liberation Sans',sans-serif;color:#1a1a1a;white-space:nowrap;transform-origin:0 0;transform:scaleX(0.8243);-webkit-text-stroke:0.12px #1a1a1a;">エージェント</span>
<span style="position:absolute;left:812.23px;top:520.80px;font:normal 13px/13px 'Liberation Sans',sans-serif;color:#1a1a1a;white-space:nowrap;transform-origin:0 0;transform:scaleX(0.8333);-webkit-text-stroke:0.12px #1a1a1a;">ピックアップ・グループ:</span>
<span style="position:absolute;left:591.30px;top:576.40px;font:normal 12px/12px 'Liberation Sans',sans-serif;color:#6a6c9c;white-space:nowrap;transform-origin:0 0;transform:scaleX(0.8913);">取り消し</span>
<span style="position:absolute;left:669.88px;top:576.60px;font:normal 12px/12px 'Liberation Sans',sans-serif;color:#6a4428;white-space:nowrap;transform-origin:0 0;transform:scaleX(1.0217);">更新</span>
<span style="position:absolute;left:470.60px;top:330.20px;font:normal 10px/10px 'Liberation Mono',monospace;color:#1a1a1a;white-space:nowrap;transform-origin:0 0;transform:scaleX(0.9750);-webkit-text-stroke:0.2px #1a1a1a;">None</span>
<span style="position:absolute;left:419.93px;top:354.30px;font:normal 10px/10px 'Liberation Mono',monospace;color:#1a1a1a;white-space:nowrap;transform-origin:0 0;transform:scaleX(0.8724);-webkit-text-stroke:0.2px #1a1a1a;">u-law</span>
<span style="position:absolute;left:500.20px;top:354.80px;font:normal 10px/10px 'Liberation Mono',monospace;color:#1a1a1a;white-space:nowrap;transform-origin:0 0;transform:scaleX(1.2000);-webkit-text-stroke:0.2px #1a1a1a;">GSM</span>
<span style="position:absolute;left:579.80px;top:354.80px;font:normal 10px/10px 'Liberation Mono',monospace;color:#1a1a1a;white-space:nowrap;transform-origin:0 0;transform:scaleX(0.9542);-webkit-text-stroke:0.2px #1a1a1a;">None</span>
<span style="position:absolute;left:659.00px;top:354.80px;font:normal 10px/10px 'Liberation Mono',monospace;color:#1a1a1a;white-space:nowrap;transform-origin:0 0;transform:scaleX(0.9750);-webkit-text-stroke:0.2px #1a1a1a;">None</span>
<span style="position:absolute;left:738.60px;top:354.80px;font:normal 10px/10px 'Liberation Mono',monospace;color:#1a1a1a;white-space:nowrap;transform-origin:0 0;transform:scaleX(0.9667);-webkit-text-stroke:0.2px #1a1a1a;">None</span>
<span style="position:absolute;left:555.52px;top:426.10px;font:normal 10px/10px 'Liberation Mono',monospace;color:#1a1a1a;white-space:nowrap;transform-origin:0 0;transform:scaleX(0.5800);-webkit-text-stroke:0.2px #1a1a1a;">1</span>
<span style="position:absolute;left:673.94px;top:425.70px;font:normal 10px/10px 'Liberation Mono',monospace;color:#1a1a1a;white-space:nowrap;transform-origin:0 0;transform:scaleX(0.4600);-webkit-text-stroke:0.2px #1a1a1a;">1</span>
<span style="position:absolute;left:561.00px;top:452.50px;font:normal 10px/10px 'Liberation Mono',monospace;color:#1a1a1a;white-space:nowrap;transform-origin:0 0;transform:scaleX(1.0048);-webkit-text-stroke:0.2px #1a1a1a;">RFC2833</span>
<span style="position:absolute;left:710.64px;top:453.00px;font:normal 10px/10px 'Liberation Mono',monospace;color:#1a1a1a;white-space:nowrap;transform-origin:0 0;transform:scaleX(1.0636);-webkit-text-stroke:0.2px #1a1a1a;">no</span>
<span style="position:absolute;left:944.52px;top:525.20px;font:normal 10px/10px 'Liberation Mono',monospace;color:#1a1a1a;white-space:nowrap;transform-origin:0 0;transform:scaleX(0.4800);-webkit-text-stroke:0.2px #1a1a1a;">1</span>
</body></html>
